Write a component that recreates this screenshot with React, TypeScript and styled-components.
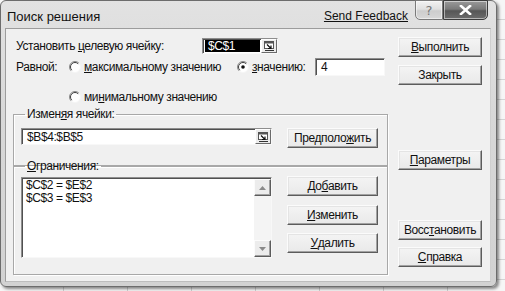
import React from "react";
import styled, { createGlobalStyle } from "styled-components";

const GlobalStyle = createGlobalStyle`
  html, body {
    margin: 0;
    padding: 0;
    width: 505px;
    height: 291px;
    overflow: hidden;
  }
  body {
    background-color: #f6f6f6;
    background-image:
      repeating-linear-gradient(90deg, transparent 0 63px, #cfcfcf 63px 64px),
      repeating-linear-gradient(180deg, transparent 0 19px, #d4d4d4 19px 20px);
    font-family: "Liberation Sans", Arial, sans-serif;
  }
`;

const Window = styled.div`
  box-sizing: border-box;
  width: 497px;
  height: 287px;
  border: 1px solid #6c6c6c;
  border-radius: 6px;
  background: linear-gradient(180deg, #e2e2e2 0%, #d8d8d8 40%, #d2d2d2 100%);
  padding: 0 5px 4px 4px;
  display: flex;
  flex-direction: column;
  box-shadow: 2px 2px 3px rgba(0, 0, 0, 0.45);
`;

const TitleBar = styled.div`
  height: 27px;
  display: flex;
  align-items: flex-start;
  flex-shrink: 0;
`;

const Title = styled.div`
  margin: 8px 0 0 2px;
  font-size: 13px;
  line-height: 16px;
  color: #111;
`;

const Feedback = styled.a`
  margin: 7px 0 0 auto;
  font-size: 12px;
  line-height: 16px;
  color: #111;
  text-decoration: underline;
`;

const CaptionBtn = styled.div<{ $close?: boolean }>`
  box-sizing: border-box;
  height: 20px;
  margin-top: -1px;
  width: ${(p) => (p.$close ? "45px" : "28px")};
  margin-left: ${(p) => (p.$close ? "0" : "7px")};
  margin-right: ${(p) => (p.$close ? "3px" : "0")};
  border: 1px solid ${(p) => (p.$close ? "#3c3c3c" : "#7a7a7a")};
  border-radius: ${(p) => (p.$close ? "0 0 5px 0" : "0 0 0 5px")};
  background: ${(p) =>
    p.$close
      ? "linear-gradient(180deg, #9a9a9a 0%, #7a7a7a 45%, #565656 55%, #6c6c6c 100%)"
      : "linear-gradient(180deg, #f2f2f2 0%, #e0e0e0 45%, #cdcdcd 55%, #d8d8d8 100%)"};
  display: flex;
  align-items: center;
  justify-content: center;
  font-family: "DejaVu Sans", sans-serif;
  font-size: 13px;
  color: #777;
  box-shadow: inset 0 0 0 1px rgba(255, 255, 255, 0.5);
`;

const Client = styled.div`
  flex: 1;
  box-sizing: border-box;
  border: 1px solid #9c9c9c;
  border-right-color: #cfcfcf;
  border-bottom-color: #bdbdbd;
  background: #f0f0f0;
  display: flex;
  padding: 8px 0 0 7px;
  font-size: 12px;
  letter-spacing: -0.4px;
  color: #111;
`;

const LeftCol = styled.div`
  width: 375px;
  display: flex;
  flex-direction: column;
`;

const RightCol = styled.div`
  width: 84px;
  margin-left: 10px;
  display: flex;
  flex-direction: column;
`;

const Row = styled.div<{ $h: number; $mt?: number; $pl?: number }>`
  height: ${(p) => p.$h}px;
  margin-top: ${(p) => p.$mt ?? 0}px;
  padding-left: ${(p) => p.$pl ?? 3}px;
  display: flex;
  align-items: center;
`;

const Label = styled.span<{ $w?: number }>`
  display: inline-block;
  width: ${(p) => (p.$w ? `${p.$w}px` : "auto")};
  flex-shrink: 0;
  white-space: nowrap;
`;

const U = styled.span`
  text-decoration: underline;
`;

const RadioOpt = styled.label<{ $w?: number }>`
  display: flex;
  align-items: center;
  width: ${(p) => (p.$w ? `${p.$w}px` : "auto")};
  flex-shrink: 0;
  white-space: nowrap;
  gap: 3px;
`;

const Sunken = styled.div<{ $w: number; $h: number }>`
  box-sizing: border-box;
  width: ${(p) => p.$w}px;
  height: ${(p) => p.$h}px;
  background: #fff;
  border-style: solid;
  border-width: 1px;
  border-color: #8e8e8e #f8f8f8 #f8f8f8 #8e8e8e;
  box-shadow: inset 1px 1px 0 #505050;
  display: flex;
  align-items: stretch;
  flex-shrink: 0;
`;

const FieldText = styled.div<{ $sel?: boolean }>`
  flex: 1;
  display: flex;
  align-items: center;
  padding-left: 3px;
  margin: 1px 0 1px 2px;
  background: ${(p) => (p.$sel ? "#000" : "transparent")};
  color: ${(p) => (p.$sel ? "#fff" : "#111")};
  white-space: nowrap;
`;

const RefBtn = styled.div`
  box-sizing: border-box;
  width: 16px;
  margin: 0 0 0 1px;
  background: #ececec;
  border-style: solid;
  border-width: 1px;
  border-color: #fff #6a6a6a #6a6a6a #fff;
  display: flex;
  align-items: center;
  justify-content: center;
`;

const Button = styled.div<{ $w?: number; $mt?: number; $ml?: number }>`
  box-sizing: border-box;
  width: ${(p) => (p.$w ? `${p.$w}px` : "100%")};
  height: 20px;
  margin-top: ${(p) => p.$mt ?? 0}px;
  margin-left: ${(p) => p.$ml ?? 0}px;
  flex-shrink: 0;
  background: linear-gradient(180deg, #f4f4f4 0%, #e9e9e9 100%);
  border-style: solid;
  border-width: 1px;
  border-color: #fbfbfb #5c5c5c #5c5c5c #fbfbfb;
  box-shadow: inset -1px -1px 0 #a2a2a2, inset 1px 1px 0 #e4e4e4;
  display: flex;
  align-items: center;
  justify-content: center;
  white-space: nowrap;
  color: #111;
`;

const Group = styled.fieldset<{ $mt: number; $h: number }>`
  box-sizing: border-box;
  margin: ${(p) => p.$mt}px 0 0 0;
  height: ${(p) => p.$h}px;
  padding: 0 0 0 7px;
  border: 1px solid #a8a8a8;
  box-shadow: inset 1px 1px 0 #fff, 1px 1px 0 #fff;
  min-width: 0;
`;

const Legend = styled.legend`
  margin-left: 4px;
  padding: 0 2px;
  font-size: 12px;
  line-height: 15px;
  color: #111;
`;

const GroupRow = styled.div<{ $mt: number }>`
  display: flex;
  align-items: flex-start;
  margin-top: ${(p) => p.$mt}px;
`;

const ButtonStack = styled.div`
  display: flex;
  flex-direction: column;
  margin-left: 15px;
  width: 91px;
`;

const ListBox = styled.div`
  box-sizing: border-box;
  width: 251px;
  height: 81px;
  margin-top: 1px;
  background: #fff;
  border-style: solid;
  border-width: 1px;
  border-color: #8e8e8e #f8f8f8 #f8f8f8 #8e8e8e;
  box-shadow: inset 1px 1px 0 #505050;
  display: flex;
`;

const ListItems = styled.div`
  flex: 1;
  padding: 1px 0 0 4px;
`;

const ListItem = styled.div`
  height: 13px;
  line-height: 13px;
  white-space: nowrap;
`;

const ScrollBar = styled.div`
  width: 17px;
  display: flex;
  flex-direction: column;
  justify-content: space-between;
  background: #f4f4f4;
  margin-top: 1px;
`;

const ScrollBtn = styled.div`
  box-sizing: border-box;
  height: 17px;
  background: #ececec;
  border-style: solid;
  border-width: 1px;
  border-color: #fbfbfb #5c5c5c #5c5c5c #fbfbfb;
  box-shadow: inset -1px -1px 0 #a2a2a2;
  display: flex;
  align-items: center;
  justify-content: center;
`;

const Radio = ({ checked }: { checked?: boolean }) => (
  <svg width="12" height="12" viewBox="0 0 12 12">
    <circle cx="6" cy="6" r="5.5" fill="#fff" />
    <path d="M2.1 9.9 A5.5 5.5 0 0 1 9.9 2.1" fill="none" stroke="#8a8a8a" strokeWidth="1" />
    <path d="M2.8 9.2 A4.5 4.5 0 0 1 9.2 2.8" fill="none" stroke="#404040" strokeWidth="1" />
    <path d="M9.9 2.1 A5.5 5.5 0 0 1 2.1 9.9" fill="none" stroke="#f4f4f4" strokeWidth="1" />
    {checked && <circle cx="6" cy="6" r="1.8" fill="#111" />}
  </svg>
);

const RefIcon = () => (
  <svg width="11" height="10" viewBox="0 0 11 10">
    <rect x="0.5" y="0.5" width="9" height="7" fill="#fff" stroke="#555" />
    <rect x="0.5" y="0.5" width="9" height="2" fill="#555" />
    <path d="M3 3.5 L7 7.5 M7 4.5 L7 7.5 L4 7.5" fill="none" stroke="#111" strokeWidth="1.2" />
    <path d="M1 9.5 H10" stroke="#333" />
  </svg>
);

const Arrow = ({ up }: { up?: boolean }) => (
  <svg width="7" height="4" viewBox="0 0 7 4">
    <path d={up ? "M0 4 L3.5 0 L7 4 Z" : "M0 0 L3.5 4 L7 0 Z"} fill="#8a8a8a" />
  </svg>
);

const CloseX = () => (
  <svg width="13" height="10" viewBox="0 0 13 10">
    <path d="M2 1 L11 9 M11 1 L2 9" stroke="#fff" strokeWidth="2.6" strokeLinecap="square" />
  </svg>
);

export default function App() {
  return (
    <>
      <GlobalStyle />
      <Window>
        <TitleBar>
          <Title>Поиск решения</Title>
          <Feedback>Send Feedback</Feedback>
          <CaptionBtn>?</CaptionBtn>
          <CaptionBtn $close>
            <CloseX />
          </CaptionBtn>
        </TitleBar>
        <Client>
          <LeftCol>
            <Row $h={18}>
              <Label $w={186}>
                Установить <U>ц</U>елевую ячейку:
              </Label>
              <Sunken $w={76} $h={16}>
                <FieldText $sel>$C$1</FieldText>
                <RefBtn>
                  <RefIcon />
                </RefBtn>
              </Sunken>
            </Row>
            <Row $h={19} $mt={2}>
              <Label $w={53}>Равной:</Label>
              <RadioOpt $w={168}>
                <Radio />
                <span>
                  <U>м</U>аксимальному значению
                </span>
              </RadioOpt>
              <RadioOpt>
                <Radio checked />
                <span>
                  <U>з</U>начению:
                </span>
              </RadioOpt>
              <Sunken $w={70} $h={18} style={{ marginLeft: "auto", marginRight: 3 }}>
                <FieldText>4</FieldText>
              </Sunken>
            </Row>
            <Row $h={16} $mt={13} $pl={56}>
              <RadioOpt>
                <Radio />
                <span>
                  ми<U>н</U>имальному значению
                </span>
              </RadioOpt>
            </Row>
            <Group $mt={2} $h={59}>
              <Legend>
                Измен<U>я</U>я ячейки:
              </Legend>
              <GroupRow $mt={6}>
                <Sunken $w={251} $h={17}>
                  <FieldText>$B$4:$B$5</FieldText>
                  <RefBtn>
                    <RefIcon />
                  </RefBtn>
                </Sunken>
                <Button $w={91} $ml={15}>
                  Предполо<U>ж</U>ить
                </Button>
              </GroupRow>
            </Group>
            <Group $mt={-7} $h={116}>
              <Legend>
                <U>О</U>граничения:
              </Legend>
              <GroupRow $mt={2}>
                <ListBox>
                  <ListItems>
                    <ListItem>$C$2 = $E$2</ListItem>
                    <ListItem>$C$3 = $E$3</ListItem>
                  </ListItems>
                  <ScrollBar>
                    <ScrollBtn>
                      <Arrow up />
                    </ScrollBtn>
                    <ScrollBtn>
                      <Arrow />
                    </ScrollBtn>
                  </ScrollBar>
                </ListBox>
                <ButtonStack>
                  <Button>
                    До<U>б</U>авить
                  </Button>
                  <Button $mt={9}>
                    <U>И</U>зменить
                  </Button>
                  <Button $mt={8}>
                    <U>У</U>далить
                  </Button>
                </ButtonStack>
              </GroupRow>
            </Group>
          </LeftCol>
          <RightCol>
            <Button>
              <U>В</U>ыполнить
            </Button>
            <Button $mt={8}>Закрыть</Button>
            <Button $mt={65}>
              <U>П</U>араметры
            </Button>
            <Button $mt={50}>
              Восс<U>т</U>ановить
            </Button>
            <Button $mt={7}>
              <U>С</U>правка
            </Button>
          </RightCol>
        </Client>
      </Window>
    </>
  );
}
